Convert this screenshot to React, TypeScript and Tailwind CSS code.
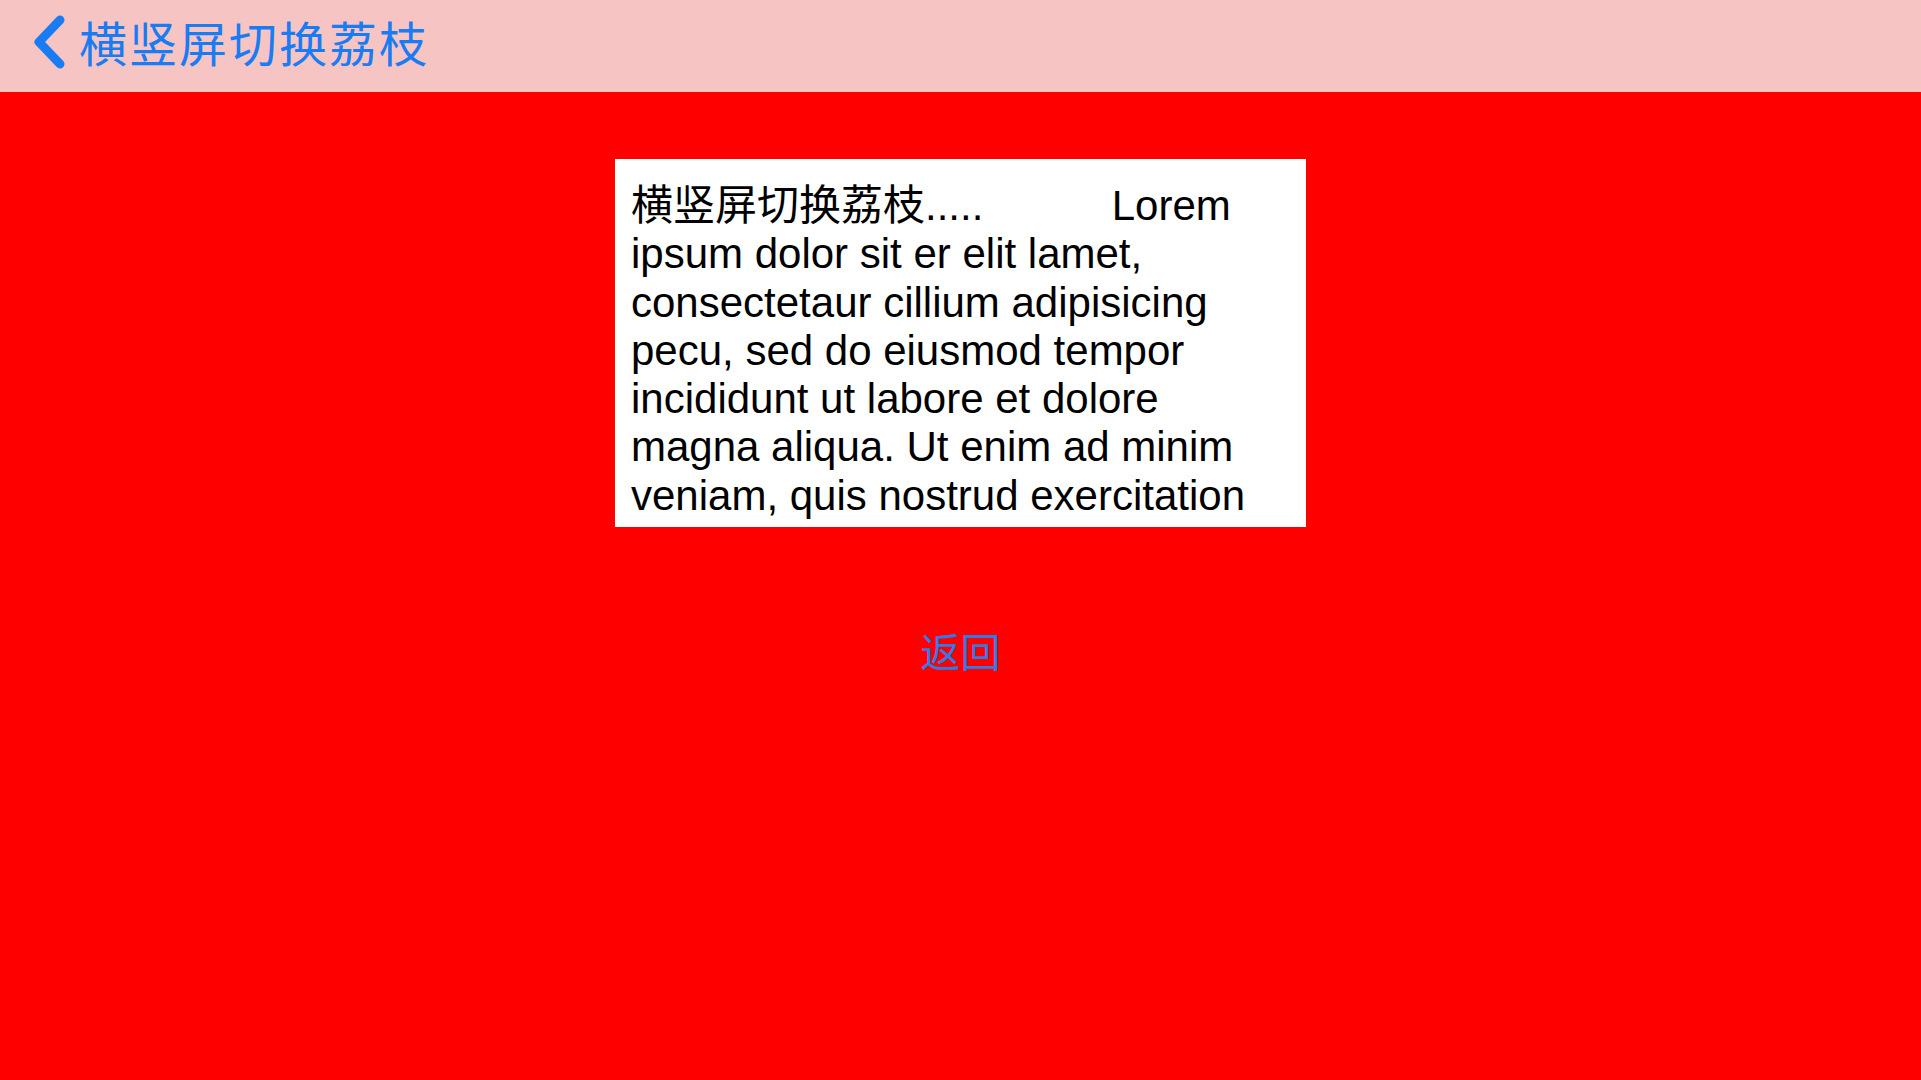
const lines = [
  "横竖屏切换荔枝.....           Lorem",
  "ipsum dolor sit er elit lamet,",
  "consectetaur cillium adipisicing",
  "pecu, sed do eiusmod tempor",
  "incididunt ut labore et dolore",
  "magna aliqua. Ut enim ad minim",
  "veniam, quis nostrud exercitation",
  "ullamco laboris nisi ut aliquip ex ea",
]

export default function App() {
  return (
    <div
      className="min-h-screen w-full bg-[#ff0000] flex flex-col"
      style={{ fontFamily: '"Liberation Sans", "Noto Sans CJK SC", sans-serif' }}
    >
      {/* Nav bar */}
      <header className="h-[92px] bg-[#f7c4c4] flex items-center pl-[32px] pb-[11px]">
        <button className="flex items-center gap-[13px] text-[#1a7cf2]">
          <svg width="34" height="54" viewBox="0 0 34 54" fill="none" className="mt-[3px]">
            <path
              d="M28 5 L7 27 L28 49"
              stroke="currentColor"
              strokeWidth="9"
              strokeLinecap="round"
              strokeLinejoin="round"
            />
          </svg>
          <span
            className="text-[48px] leading-none tracking-[2px]"
            style={{ fontFamily: '"Noto Sans CJK SC", sans-serif' }}
          >
            横竖屏切换荔枝
          </span>
        </button>
      </header>

      <main className="flex flex-col items-center pt-[67px]">
        {/* Text view */}
        <div className="w-[691px] h-[368px] bg-white overflow-hidden px-[16px] pt-[23px]">
          <div className="text-[42px] leading-[48.3px] text-black whitespace-pre">
            {lines.map((l) => (
              <div key={l}>{l}</div>
            ))}
          </div>
        </div>

        <button
          className="mt-[99px] text-[40px] leading-[48px] text-[#2f7be8]"
          style={{ fontFamily: '"Noto Sans CJK SC", sans-serif' }}
        >
          返回
        </button>
      </main>
    </div>
  )
}
